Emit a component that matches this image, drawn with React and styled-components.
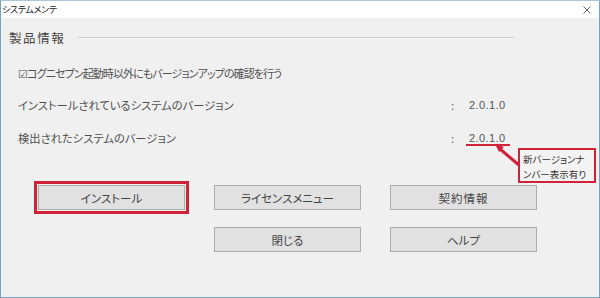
import React from 'react';
import styled, { createGlobalStyle } from 'styled-components';

const Global = createGlobalStyle`
  html, body {
    margin: 0;
    padding: 0;
    background: #f0f0f0;
  }
  body {
    font-family: "Noto Sans CJK JP", "Noto Sans", sans-serif;
    font-feature-settings: "palt";
  }
`;

const Window = styled.div`
  width: 600px;
  height: 298px;
  box-sizing: border-box;
  border: 1px solid #6fa6c4;
  border-top-color: #a9c8da;
  background: #f0f0f0;
  display: flex;
  flex-direction: column;
  overflow: hidden;
`;

const TitleBar = styled.div`
  height: 17px;
  background: #fff;
  display: flex;
  align-items: center;
  justify-content: space-between;
  padding: 0 8px 0 1px;
  font-size: 9px;
  color: #222;
  letter-spacing: -0.3px;
`;

const CloseIcon = styled.svg`
  width: 8px;
  height: 8px;
  display: block;
`;

const Body = styled.div`
  flex: 1;
  padding: 9px 0 0 0;
  color: #505050;
  font-size: 11.3px;
`;

const Header = styled.div`
  display: flex;
  align-items: center;
  height: 20px;
  padding-left: 8px;
`;

const HeaderTitle = styled.span`
  font-size: 12.5px;
  letter-spacing: 1.6px;
  color: #444;
  width: 69px;
`;

const Rule = styled.div`
  width: 436px;
  height: 1px;
  background: #c9c9c9;
  box-shadow: 0 1px 0 #fafafa;
`;

const Row = styled.div`
  display: grid;
  grid-template-columns: 433px 18px auto;
  align-items: center;
  height: ${(p) => p.$h || 20}px;
  margin-top: ${(p) => p.$mt || 0}px;
  padding-left: 17px;
  white-space: nowrap;
`;

const CheckLabel = styled.span`
  font-size: 11px;
  letter-spacing: -0.9px;
`;

const Colon = styled.span`
  color: #666;
`;

const Value = styled.span`
  position: relative;
  display: inline-block;
  height: 16px;
  line-height: 16px;
  font-family: "Liberation Sans", sans-serif;
  font-size: 11px;
  letter-spacing: 0.4px;
  color: #555;
`;

const Underline = styled.span`
  position: absolute;
  left: -3px;
  top: 14px;
  width: 44px;
  height: 2px;
  background: #cf2239;
`;

const Arrow = styled.svg`
  position: absolute;
  left: 20px;
  top: 9px;
  width: 40px;
  height: 34px;
  overflow: visible;
`;

const Note = styled.div`
  position: absolute;
  left: 49px;
  top: 18px;
  width: 78px;
  height: 35px;
  box-sizing: border-box;
  border: 2px solid #cf2239;
  background: #f3f3f3;
  padding: 2px 0 0 3px;
  font-family: "Noto Sans CJK JP", sans-serif;
  font-size: 9.5px;
  line-height: 15px;
  letter-spacing: 0;
  color: #333;
  white-space: nowrap;
`;

const Buttons = styled.div`
  display: grid;
  grid-template-columns: repeat(3, 147px);
  grid-auto-rows: 25px;
  column-gap: 29px;
  row-gap: 17px;
  margin: 31px 0 0 37px;
`;

const Button = styled.button`
  grid-column: ${(p) => p.$col || 'auto'};
  box-sizing: border-box;
  height: 25px;
  border: 1px solid #adadad;
  background: #e1e1e1;
  color: #444;
  font-family: "Noto Sans CJK JP", sans-serif;
  font-feature-settings: "palt";
  font-size: 11.5px;
  letter-spacing: ${(p) => (p.$wide ? '1px' : '0')};
  padding: 0;
  outline: ${(p) => (p.$marked ? '3px solid #cf2239' : 'none')};
  outline-offset: 1px;
`;

const App = () => (
  <>
    <Global />
    <Window>
      <TitleBar>
        <span>システムメンテ</span>
        <CloseIcon viewBox="0 0 8 8">
          <path d="M0.5 0.5 L7.5 7.5 M7.5 0.5 L0.5 7.5" stroke="#555" strokeWidth="0.9" />
        </CloseIcon>
      </TitleBar>
      <Body>
        <Header>
          <HeaderTitle>製品情報</HeaderTitle>
          <Rule />
        </Header>
        <Row $mt={16}>
          <CheckLabel>☑コグニセプン起動時以外にもバージョンアップの確認を行う</CheckLabel>
        </Row>
        <Row $mt={5} $h={33}>
          <span>インストールされているシステムのバージョン</span>
          <Colon>:</Colon>
          <Value>2.0.1.0</Value>
        </Row>
        <Row $h={33}>
          <span>検出されたシステムのバージョン</span>
          <Colon>:</Colon>
          <Value>
            2.0.1.0
            <Underline />
            <Arrow viewBox="0 0 40 34">
              <line x1="31" y1="27" x2="11" y2="10" stroke="#cf2239" strokeWidth="3" />
              <polygon points="6,5 15,8 10,13" fill="#cf2239" />
            </Arrow>
            <Note>
              <div>新バージョンナ</div>
              <div>ンバー表示有り</div>
            </Note>
          </Value>
        </Row>
        <Buttons>
          <Button $marked>インストール</Button>
          <Button>ライセンスメニュー</Button>
          <Button $wide>契約情報</Button>
          <Button $col={2}>閉じる</Button>
          <Button>ヘルプ</Button>
        </Buttons>
      </Body>
    </Window>
  </>
);

export default App;
